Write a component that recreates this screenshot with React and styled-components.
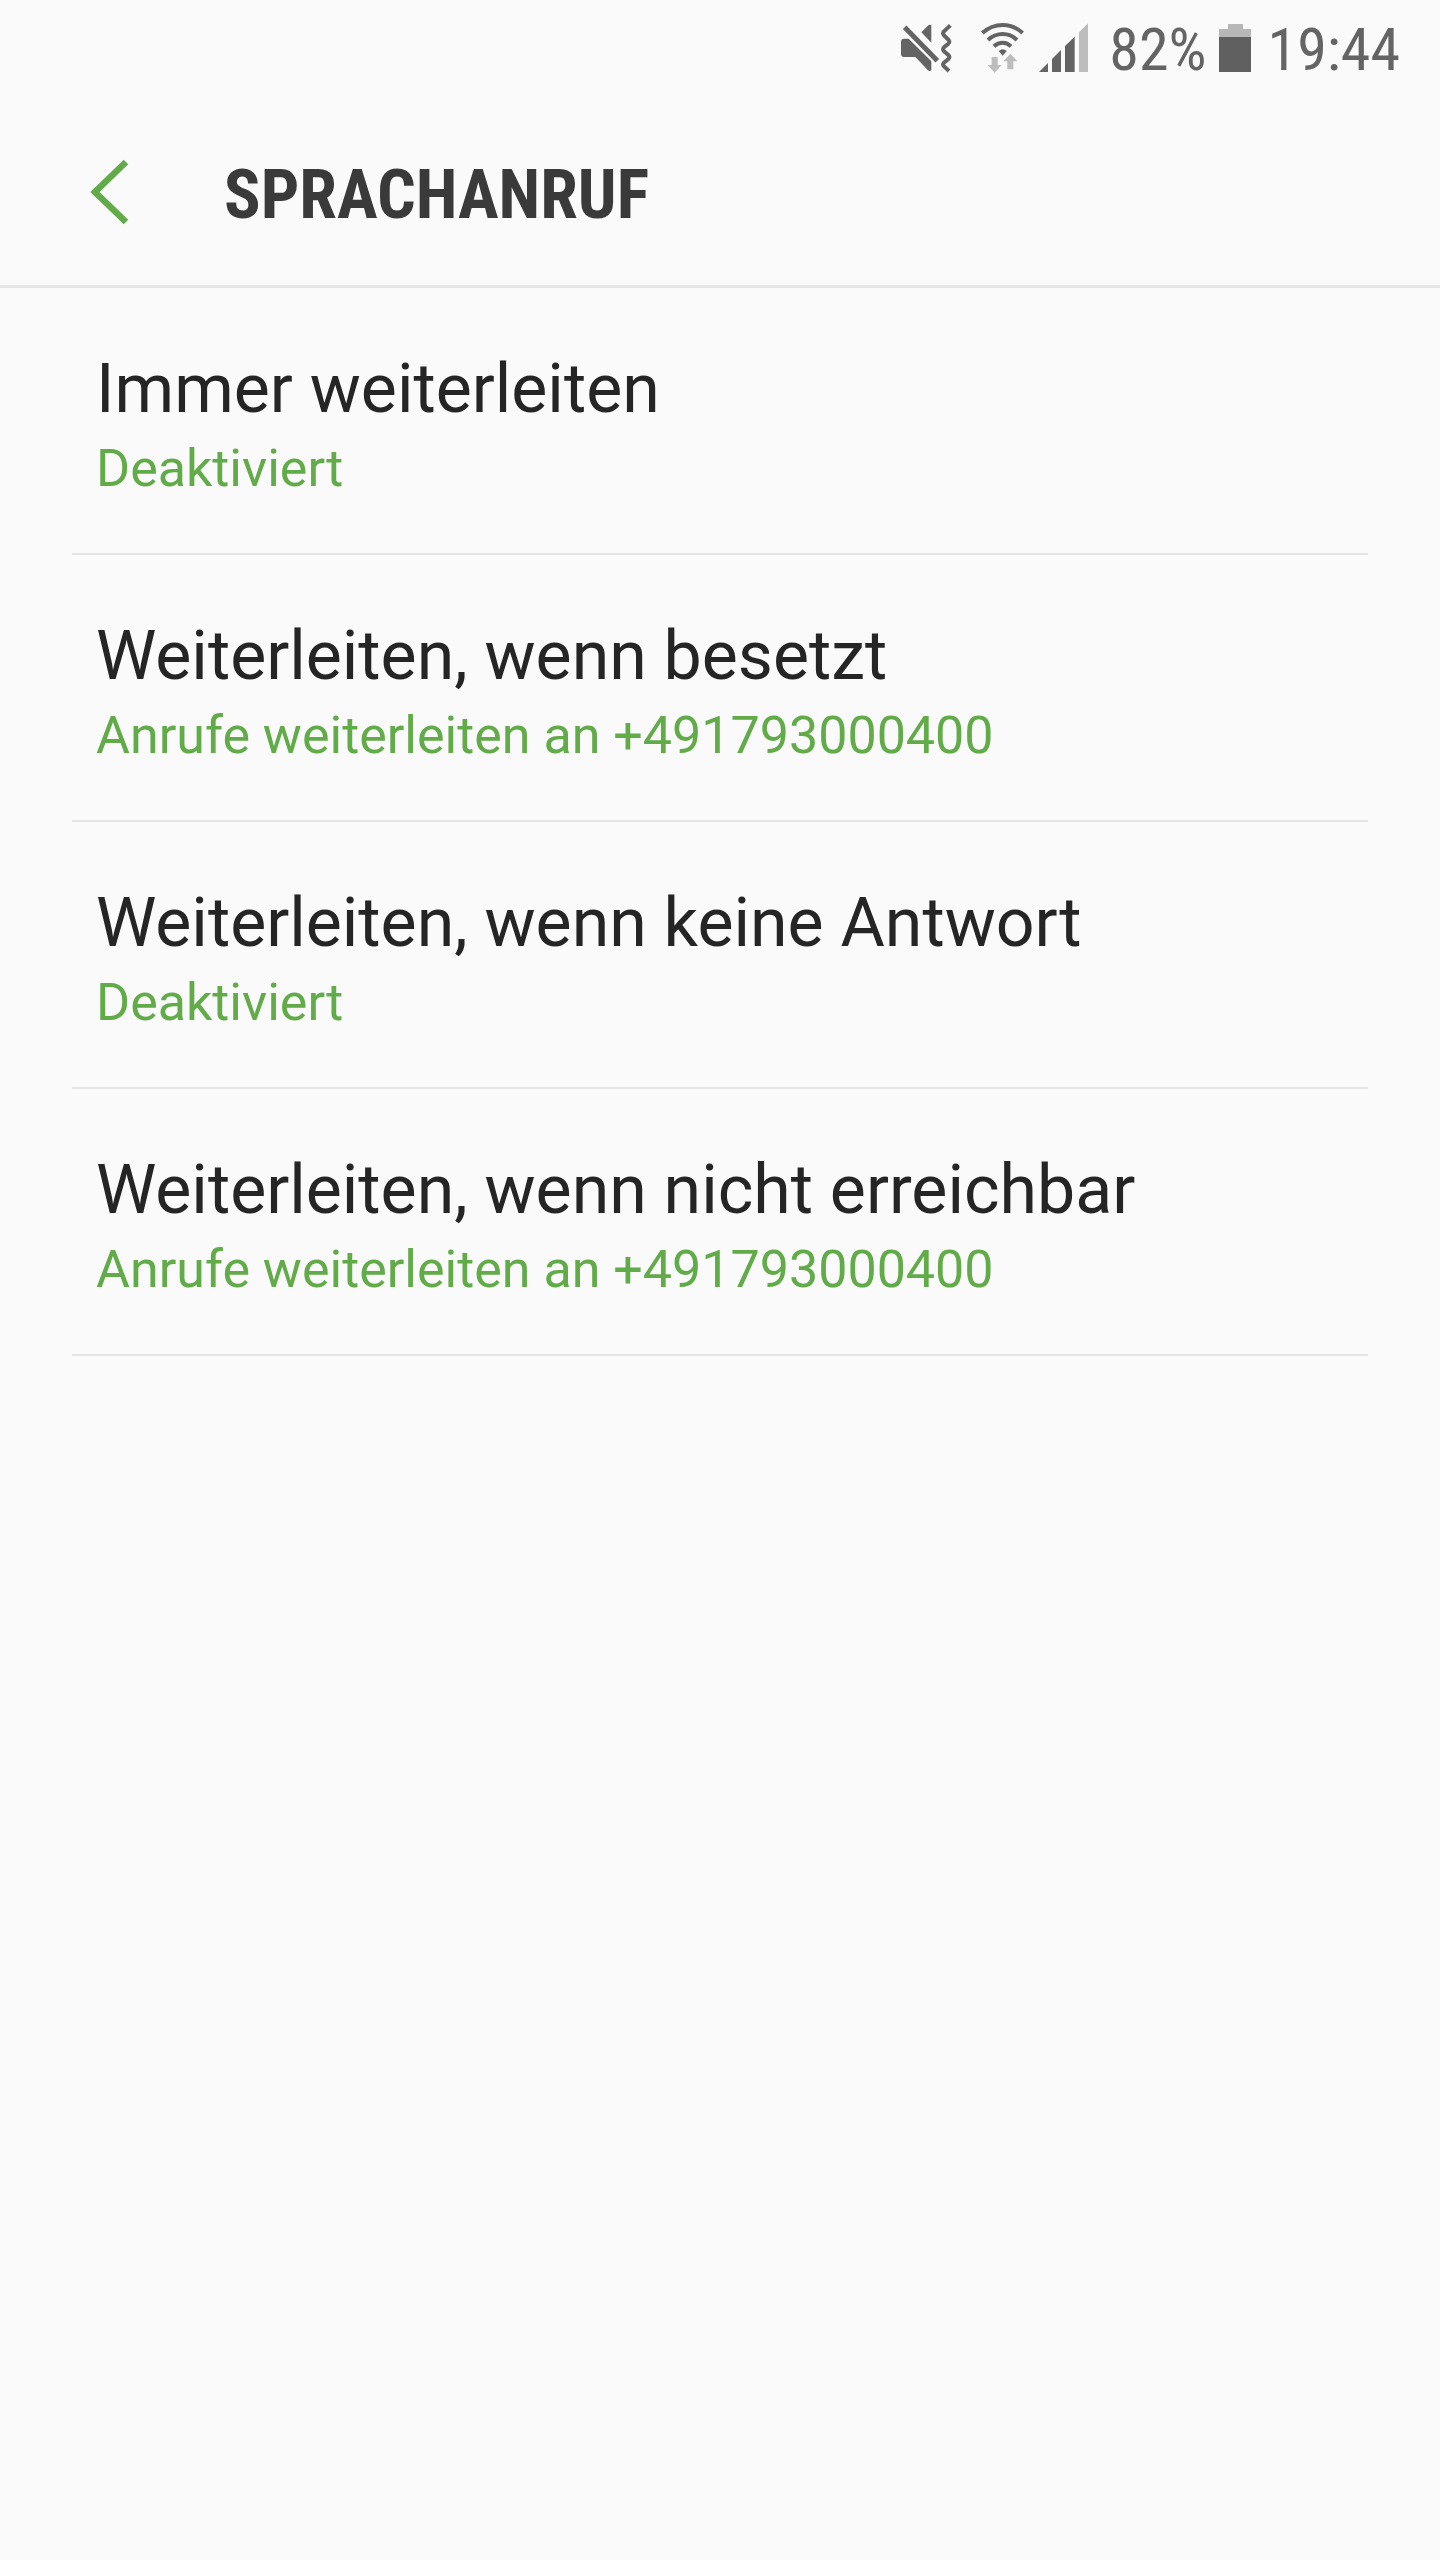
import React from "react";
import styled, { createGlobalStyle } from "styled-components";

const GlobalStyle = createGlobalStyle`
  *, *::before, *::after { box-sizing: border-box; }
  body {
    margin: 0;
    background: #fafafa;
    font-family: Roboto, "Liberation Sans", sans-serif;
  }
`;

const Screen = styled.div`
  min-height: 100vh;
  background: #fafafa;
  color: #252525;
`;

const StatusBar = styled.div`
  display: flex;
  align-items: center;
  justify-content: flex-end;
  height: 96px;
  padding-right: 40px;
  color: #646464;
`;

const StatusIcon = styled.svg`
  display: block;
  flex: none;
  width: ${(p) => p.$width}px;
  height: 50px;
  margin-right: ${(p) => p.$gap}px;
`;

const StatusText = styled.span`
  padding-top: 4px;
  font-family: "Roboto Condensed", Roboto, sans-serif;
  font-size: 60px;
  line-height: 72px;
  margin-right: ${(p) => p.$gap || 0}px;
`;

const Header = styled.header`
  display: flex;
  align-items: center;
  gap: 94px;
  height: 192px;
  padding-top: 3px;
  padding-left: 88px;
  border-bottom: 3px solid #e7e7e7;
`;

const BackButton = styled.button`
  display: block;
  padding: 0;
  border: 0;
  background: none;
  color: #62ab49;
  cursor: pointer;

  svg { display: block; }
`;

const Title = styled.h1`
  margin: 0;
  padding-top: 5px;
  color: #3a3a3a;
  font-family: "Roboto Condensed", Roboto, sans-serif;
  font-size: 68px;
  font-weight: 700;
  line-height: 80px;
`;

const List = styled.ul`
  margin: 0;
  padding: 0 72px;
  list-style: none;
`;

const Item = styled.li`
  border-bottom: 2px solid #e4e4e4;
`;

const ItemButton = styled.button`
  display: flex;
  flex-direction: column;
  align-items: flex-start;
  gap: 9px;
  width: 100%;
  padding: 61px 24px 53px;
  border: 0;
  background: none;
  color: inherit;
  font: inherit;
  text-align: left;
  cursor: pointer;
`;

const ItemTitle = styled.span`
  font-size: 68px;
  line-height: 80px;
`;

const ItemStatus = styled.span`
  color: #62ab49;
  font-size: 52px;
  line-height: 62px;
`;

const MuteIcon = () => (
  <StatusIcon $width={52} $gap={29} viewBox="30 39 156 150" fill="currentColor" aria-hidden="true">
    <path d="M42 86H56L124 154V180Q120 186 114 181L76 141H42Q33 141 33 132V95Q33 86 42 86Z" />
    <path d="M94 67L115 46Q120 42 124 46V98Z" />
    <path d="M44 52L142 152" fill="none" stroke="currentColor" strokeWidth="15" />
    <path
      d="M181 46L162 64Q156 70 162 76L175 89Q181 95 175 101L162 112Q156 118 162 124L175 135Q181 141 175 147L162 158Q156 164 162 169L177 183"
      fill="none"
      stroke="currentColor"
      strokeWidth="12"
    />
  </StatusIcon>
);

const WifiIcon = () => (
  <StatusIcon $width={43} $gap={14} viewBox="273 39 129 150" aria-hidden="true">
    <g fill="none" stroke="currentColor" strokeWidth="12">
      <path d="M277 69Q304 45 338 45T398 69" />
      <path d="M294 90Q313 72 338 72T381 90" />
      <path d="M312 109Q324 98 338 98T363 109" />
    </g>
    <path d="M326 123Q338 112 350 123L338 137Z" fill="currentColor" />
    <path d="M305 141H323V165H335L314 188L293 165H305Z" fill="#bdbdbd" />
    <path d="M352 178H370V154H382L361 131L340 154H352Z" fill="#bdbdbd" />
  </StatusIcon>
);

const SignalIcon = () => (
  <StatusIcon $width={51} $gap={20} viewBox="447 39 153 150" fill="currentColor" aria-hidden="true">
    <path d="M450 186L477 159V186Z" />
    <path d="M489 186V147L516 120V186Z" />
    <path d="M528 186V108L557 80V186Z" />
    <path d="M570 186V67L597 40V186Z" fill="#bdbdbd" />
  </StatusIcon>
);

const BatteryIcon = () => (
  <StatusIcon $width={32} $gap={17} viewBox="0 0 32 50" aria-hidden="true">
    <path d="M9 1H24V6H32V14H0V6H9Z" fill="#b7b7b7" />
    <path d="M0 14H32V49H0Z" fill="#606060" />
  </StatusIcon>
);

const BackIcon = () => (
  <svg width="42" height="66" viewBox="0 0 42 66" fill="none" aria-hidden="true">
    <path d="M38 3L7 33L38 63" stroke="currentColor" strokeWidth="6.5" />
  </svg>
);

const settings = [
  { title: "Immer weiterleiten", status: "Deaktiviert" },
  { title: "Weiterleiten, wenn besetzt", status: "Anrufe weiterleiten an +491793000400" },
  { title: "Weiterleiten, wenn keine Antwort", status: "Deaktiviert" },
  { title: "Weiterleiten, wenn nicht erreichbar", status: "Anrufe weiterleiten an +491793000400" },
];

export default function App() {
  return (
    <Screen>
      <GlobalStyle />
      <StatusBar>
        <MuteIcon />
        <WifiIcon />
        <SignalIcon />
        <StatusText $gap={12}>82%</StatusText>
        <BatteryIcon />
        <StatusText>19:44</StatusText>
      </StatusBar>
      <Header>
        <BackButton type="button" aria-label="Zurück">
          <BackIcon />
        </BackButton>
        <Title>SPRACHANRUF</Title>
      </Header>
      <main>
        <List>
          {settings.map((item) => (
            <Item key={item.title}>
              <ItemButton type="button">
                <ItemTitle>{item.title}</ItemTitle>
                <ItemStatus>{item.status}</ItemStatus>
              </ItemButton>
            </Item>
          ))}
        </List>
      </main>
    </Screen>
  );
}
